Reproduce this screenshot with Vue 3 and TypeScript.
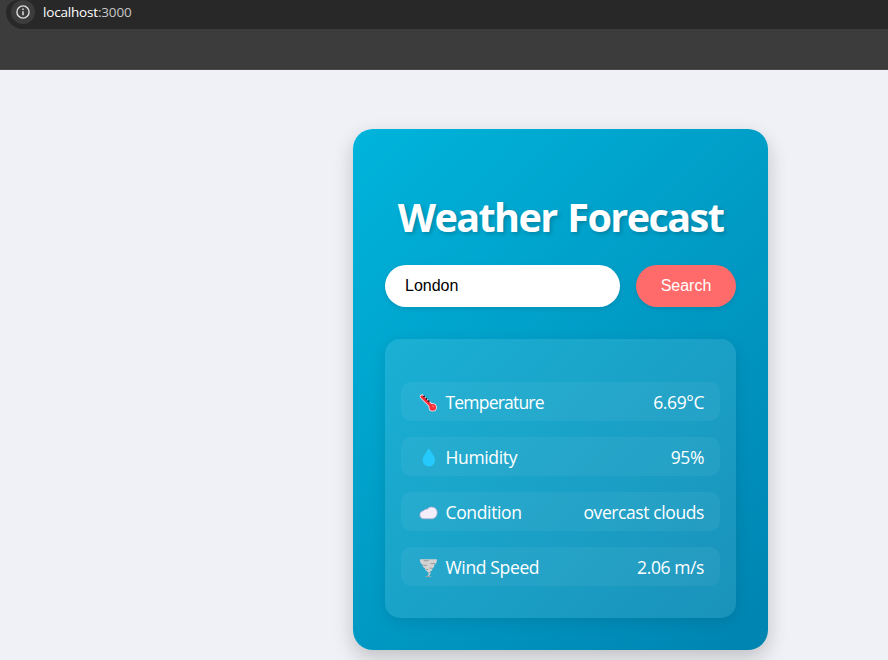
<script setup lang="ts">
import { ref } from 'vue'

interface Reading {
  id: string
  label: string
  value: string
}

const city = ref('London')

const readings: Reading[] = [
  { id: 'temperature', label: 'Temperature', value: '6.69°C' },
  { id: 'humidity', label: 'Humidity', value: '95%' },
  { id: 'condition', label: 'Condition', value: 'overcast clouds' },
  { id: 'wind', label: 'Wind Speed', value: '2.06 m/s' },
]
</script>

<template>
  <div class="window">
    <header class="chrome">
      <div class="omnibox">
        <span class="info">
          <svg width="14" height="14" viewBox="0 0 14 14" fill="none">
            <circle cx="7" cy="7" r="6.1" stroke="#dedede" stroke-width="1.4" />
            <path d="M7 6.2v4M7 3.5v1.5" stroke="#dedede" stroke-width="1.5" />
          </svg>
        </span>
        <span class="url">localhost<span class="port">:3000</span></span>
      </div>
    </header>

    <main class="page">
      <section class="card">
        <h1 class="title">Weather Forecast</h1>
        <form class="search" @submit.prevent>
          <input v-model="city" class="city" type="text" />
          <button class="submit" type="submit">Search</button>
        </form>

        <div class="panel">
          <div v-for="item in readings" :key="item.id" class="row" :class="item.id">
            <svg v-if="item.id === 'temperature'" class="icon" width="20" height="20" viewBox="0 0 20 20">
              <path d="M4 3.6L14 13.6" stroke="#f3e5ec" stroke-width="4.4" stroke-linecap="round" />
              <circle cx="14.7" cy="14.4" r="4.1" fill="#f3e5ec" />
              <path d="M4 3.8L14 13.8" stroke="#f92f3b" stroke-width="3" stroke-linecap="round" />
              <circle cx="14.7" cy="14.4" r="3.3" fill="#f92f3b" />
              <path d="M5.4 2.9l1.3 1.3M7.7 5.2l1.3 1.3M10 7.5l1.3 1.3" stroke="#231f2b" stroke-width="1.8" />
              <path d="M14.6 13l1.3.8" stroke="#ff8c92" stroke-width="1" stroke-linecap="round" />
            </svg>
            <svg v-else-if="item.id === 'humidity'" class="icon" width="20" height="20" viewBox="0 0 20 20">
              <path d="M10.8.7c.5 0 .7.4.9.8 1.6 3.3 5.3 6.7 5.3 10.8a6.1 6.1 0 0 1-12.3 0c0-4.1 3.6-7.5 5.2-10.8.2-.4.4-.8.9-.8z" fill="#26c9fc" />
            </svg>
            <svg v-else-if="item.id === 'condition'" class="icon" width="20" height="20" viewBox="0 0 20 20">
              <path d="M5.8 15.8C3.4 15.8 1.9 14 1.9 11.9c0-2.3 1.5-3.9 3.7-4.2.8-1.2 2.1-1.8 3.7-1.4C10.2 4.8 11.8 4 13.8 4.1c3.3.1 5.4 2.5 5.4 5.4 0 3.8-2.4 6.3-5.7 6.3z" fill="#f3eefa" stroke="#b9a9cc" stroke-width=".7" />
            </svg>
            <svg v-else class="icon" width="20" height="20" viewBox="0 0 20 20">
              <path d="M2 1.3h16.8c.5 2.2-.2 4.3-2.6 5.4.4 1.8-.3 3.1-1.8 3.6.2 1.5-.5 2.6-1.9 3 .3 1.7-.2 3.2-1.4 4.4l2.5 1.3H7l3.2-1.5c.7-1.4.4-2.6-.6-3.7-1.9-1.1-2.8-2.2-2.4-3.4C5.1 9.5 4.2 8.1 4.5 6.6 2.6 5.7 1.6 3.6 2 1.3z" fill="#d2d2d2" />
              <path d="M5.7 2.7h5M12.6 5.6H17M4.6 7.3H9M11.6 10.2h3M8 11.5h2M11 14.3h1.3M8 18.6h4.4" stroke="#9a9a9a" stroke-width="1" />
            </svg>
            <span class="label">{{ item.label }}</span>
            <span class="value">{{ item.value }}</span>
          </div>
        </div>
      </section>
    </main>
  </div>
</template>

<style>
body {
  margin: 0;
  background: #f0f1f6;
}
</style>

<style scoped>
.window {
  box-sizing: border-box;
  height: 660px;
  overflow: hidden;
  font-family: 'Open Sans', 'Noto Sans', sans-serif;
  background: #f0f1f6;
}
.chrome {
  box-sizing: border-box;
  height: 70px;
  padding-left: 6px;
  background: #3c3c3c;
  border-bottom: 1px solid #4a4a4a;
}
.omnibox {
  box-sizing: border-box;
  display: flex;
  align-items: flex-start;
  gap: 8px;
  height: 29px;
  padding-left: 5px;
  background: #282828;
  border-radius: 12px 0 0 17px;
}
.info {
  display: flex;
  align-items: center;
  justify-content: center;
  width: 24px;
  height: 24px;
  background: #3c3c3c;
  border-radius: 50%;
}
.url {
  color: #fff;
  font-size: 13.5px;
  line-height: 24px;
  letter-spacing: -0.18px;
}
.port {
  color: #c7c7c7;
}
.page {
  padding: 59px 0 0 353px;
}
.card {
  box-sizing: border-box;
  width: 415px;
  height: 521px;
  padding: 61px 32px 32px;
  background: linear-gradient(135deg, #00b4db, #0083b0);
  border-radius: 20px;
  box-shadow: 0 8px 20px rgba(0, 0, 0, 0.2);
}
.title {
  margin: 0 -10px;
  color: #fff;
  font-size: 39.6px;
  font-weight: 700;
  line-height: 54px;
  letter-spacing: -1.6px;
  word-spacing: 2px;
  text-align: center;
  white-space: nowrap;
  text-shadow: 2px 2px 4px rgba(0, 0, 0, 0.2);
}
.search {
  display: flex;
  gap: 16px;
  margin: 21px 0 32px;
}
.city,
.submit {
  box-sizing: border-box;
  height: 42px;
  margin: 0;
  border: 0;
  border-radius: 25px;
  font: 16px 'Liberation Sans', Arial, sans-serif;
  box-shadow: 0 2px 5px rgba(0, 0, 0, 0.1);
}
.city {
  flex: 1;
  min-width: 0;
  padding: 0 20px;
  color: #000;
  background: #fff;
  outline: none;
}
.submit {
  width: 100px;
  padding: 0;
  color: #fff;
  background: #ff6b6b;
}
.panel {
  box-sizing: border-box;
  display: flex;
  flex-direction: column;
  gap: 16px;
  height: 279px;
  padding: 43px 16px 32px;
  background: rgba(255, 255, 255, 0.1);
  border-radius: 15px;
  box-shadow: 0 4px 15px rgba(0, 0, 0, 0.1);
}
.row {
  box-sizing: border-box;
  display: flex;
  align-items: center;
  height: 39px;
  padding: 1px 16px 0 17px;
  color: #fff;
  font-size: 17.5px;
  line-height: 24px;
  background: rgba(255, 255, 255, 0.05);
  border-radius: 10px;
}
.icon {
  flex: none;
  margin: 1px 7.5px 0 0;
}
.label {
  flex: 1;
  letter-spacing: -0.35px;
}
.temperature .label {
  letter-spacing: -0.8px;
}
.value {
  letter-spacing: -0.4px;
}
</style>
